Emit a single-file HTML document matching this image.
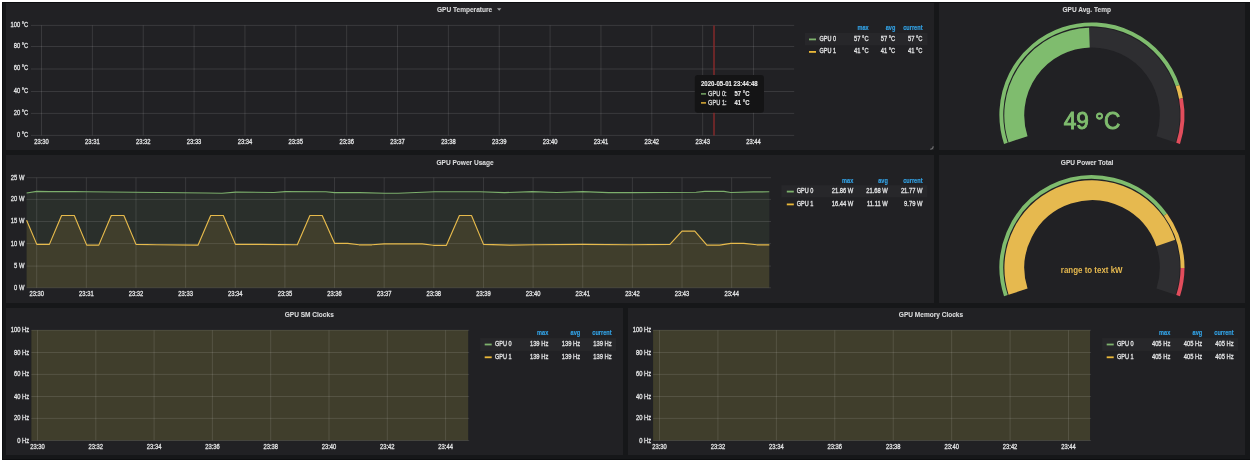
<!DOCTYPE html>
<html><head><meta charset="utf-8"><style>
html,body{margin:0;padding:0;background:#fff;width:1250px;height:462px;overflow:hidden;}
svg{display:block;font-family:"Liberation Sans", sans-serif;will-change:transform;}
</style></head><body>
<svg width="1250" height="462" viewBox="0 0 1250 462">
<rect x="2" y="2" width="1248" height="458" fill="#161719" />
<rect x="2" y="2" width="1248" height="1" fill="#0d0e10" />
<rect x="2" y="2" width="1" height="458" fill="#0d0e10" />
<rect x="2" y="459" width="1248" height="1" fill="#0d0e10" />
<rect x="6" y="3" width="928" height="147" fill="#212124" />
<rect x="939" y="3" width="306" height="147" fill="#212124" />
<rect x="6" y="155" width="928" height="148" fill="#212124" />
<rect x="939" y="155" width="306" height="148" fill="#212124" />
<rect x="6" y="308" width="617" height="147" fill="#212124" />
<rect x="628" y="308" width="617" height="147" fill="#212124" />
<text transform="translate(437.00,12.00) scale(1,1.1)" font-size="6.55" text-anchor="start" font-weight="bold" fill="#d8d9da" stroke="#d8d9da" stroke-width="0.1" >GPU Temperature</text>
<path d="M497,8.3 L501.4,8.3 L499.2,10.7 Z" fill="#9fa1a3"/>
<text transform="translate(1062.50,12.00) scale(1,1.1)" font-size="6.55" text-anchor="start" font-weight="bold" fill="#d8d9da" stroke="#d8d9da" stroke-width="0.1" >GPU Avg. Temp</text>
<text transform="translate(436.50,164.70) scale(1,1.1)" font-size="6.55" text-anchor="start" font-weight="bold" fill="#d8d9da" stroke="#d8d9da" stroke-width="0.1" >GPU Power Usage</text>
<text transform="translate(1060.80,164.70) scale(1,1.1)" font-size="6.55" text-anchor="start" font-weight="bold" fill="#d8d9da" stroke="#d8d9da" stroke-width="0.1" >GPU Power Total</text>
<text transform="translate(284.70,317.00) scale(1,1.1)" font-size="6.55" text-anchor="start" font-weight="bold" fill="#d8d9da" stroke="#d8d9da" stroke-width="0.1" >GPU SM Clocks</text>
<text transform="translate(898.80,317.00) scale(1,1.1)" font-size="6.55" text-anchor="start" font-weight="bold" fill="#d8d9da" stroke="#d8d9da" stroke-width="0.1" >GPU Memory Clocks</text>
<line x1="31" y1="135.4" x2="794.2" y2="135.4" stroke="rgba(255,255,255,0.11)" stroke-width="1"/>
<text transform="translate(28.30,136.83) scale(1,1.15)" font-size="5.8" text-anchor="end" font-weight="normal" fill="#e2e3e4" stroke="#e2e3e4" stroke-width="0.25" >0 °C</text>
<line x1="31" y1="113.4" x2="794.2" y2="113.4" stroke="rgba(255,255,255,0.11)" stroke-width="1"/>
<text transform="translate(28.30,114.83) scale(1,1.15)" font-size="5.8" text-anchor="end" font-weight="normal" fill="#e2e3e4" stroke="#e2e3e4" stroke-width="0.25" >20 °C</text>
<line x1="31" y1="91.5" x2="794.2" y2="91.5" stroke="rgba(255,255,255,0.11)" stroke-width="1"/>
<text transform="translate(28.30,92.93) scale(1,1.15)" font-size="5.8" text-anchor="end" font-weight="normal" fill="#e2e3e4" stroke="#e2e3e4" stroke-width="0.25" >40 °C</text>
<line x1="31" y1="69.0" x2="794.2" y2="69.0" stroke="rgba(255,255,255,0.11)" stroke-width="1"/>
<text transform="translate(28.30,70.43) scale(1,1.15)" font-size="5.8" text-anchor="end" font-weight="normal" fill="#e2e3e4" stroke="#e2e3e4" stroke-width="0.25" >60 °C</text>
<line x1="31" y1="46.5" x2="794.2" y2="46.5" stroke="rgba(255,255,255,0.11)" stroke-width="1"/>
<text transform="translate(28.30,47.93) scale(1,1.15)" font-size="5.8" text-anchor="end" font-weight="normal" fill="#e2e3e4" stroke="#e2e3e4" stroke-width="0.25" >80 °C</text>
<line x1="31" y1="25.4" x2="794.2" y2="25.4" stroke="rgba(255,255,255,0.11)" stroke-width="1"/>
<text transform="translate(28.30,26.83) scale(1,1.15)" font-size="5.8" text-anchor="end" font-weight="normal" fill="#e2e3e4" stroke="#e2e3e4" stroke-width="0.25" >100 °C</text>
<line x1="41.5" y1="25.4" x2="41.5" y2="135.4" stroke="rgba(255,255,255,0.11)" stroke-width="1"/>
<text transform="translate(41.50,143.70) scale(1,1.15)" font-size="5.8" text-anchor="middle" font-weight="normal" fill="#e2e3e4" stroke="#e2e3e4" stroke-width="0.25" >23:30</text>
<line x1="92.36" y1="25.4" x2="92.36" y2="135.4" stroke="rgba(255,255,255,0.11)" stroke-width="1"/>
<text transform="translate(92.36,143.70) scale(1,1.15)" font-size="5.8" text-anchor="middle" font-weight="normal" fill="#e2e3e4" stroke="#e2e3e4" stroke-width="0.25" >23:31</text>
<line x1="143.22" y1="25.4" x2="143.22" y2="135.4" stroke="rgba(255,255,255,0.11)" stroke-width="1"/>
<text transform="translate(143.22,143.70) scale(1,1.15)" font-size="5.8" text-anchor="middle" font-weight="normal" fill="#e2e3e4" stroke="#e2e3e4" stroke-width="0.25" >23:32</text>
<line x1="194.07999999999998" y1="25.4" x2="194.07999999999998" y2="135.4" stroke="rgba(255,255,255,0.11)" stroke-width="1"/>
<text transform="translate(194.08,143.70) scale(1,1.15)" font-size="5.8" text-anchor="middle" font-weight="normal" fill="#e2e3e4" stroke="#e2e3e4" stroke-width="0.25" >23:33</text>
<line x1="244.94" y1="25.4" x2="244.94" y2="135.4" stroke="rgba(255,255,255,0.11)" stroke-width="1"/>
<text transform="translate(244.94,143.70) scale(1,1.15)" font-size="5.8" text-anchor="middle" font-weight="normal" fill="#e2e3e4" stroke="#e2e3e4" stroke-width="0.25" >23:34</text>
<line x1="295.8" y1="25.4" x2="295.8" y2="135.4" stroke="rgba(255,255,255,0.11)" stroke-width="1"/>
<text transform="translate(295.80,143.70) scale(1,1.15)" font-size="5.8" text-anchor="middle" font-weight="normal" fill="#e2e3e4" stroke="#e2e3e4" stroke-width="0.25" >23:35</text>
<line x1="346.65999999999997" y1="25.4" x2="346.65999999999997" y2="135.4" stroke="rgba(255,255,255,0.11)" stroke-width="1"/>
<text transform="translate(346.66,143.70) scale(1,1.15)" font-size="5.8" text-anchor="middle" font-weight="normal" fill="#e2e3e4" stroke="#e2e3e4" stroke-width="0.25" >23:36</text>
<line x1="397.52" y1="25.4" x2="397.52" y2="135.4" stroke="rgba(255,255,255,0.11)" stroke-width="1"/>
<text transform="translate(397.52,143.70) scale(1,1.15)" font-size="5.8" text-anchor="middle" font-weight="normal" fill="#e2e3e4" stroke="#e2e3e4" stroke-width="0.25" >23:37</text>
<line x1="448.38" y1="25.4" x2="448.38" y2="135.4" stroke="rgba(255,255,255,0.11)" stroke-width="1"/>
<text transform="translate(448.38,143.70) scale(1,1.15)" font-size="5.8" text-anchor="middle" font-weight="normal" fill="#e2e3e4" stroke="#e2e3e4" stroke-width="0.25" >23:38</text>
<line x1="499.24" y1="25.4" x2="499.24" y2="135.4" stroke="rgba(255,255,255,0.11)" stroke-width="1"/>
<text transform="translate(499.24,143.70) scale(1,1.15)" font-size="5.8" text-anchor="middle" font-weight="normal" fill="#e2e3e4" stroke="#e2e3e4" stroke-width="0.25" >23:39</text>
<line x1="550.1" y1="25.4" x2="550.1" y2="135.4" stroke="rgba(255,255,255,0.11)" stroke-width="1"/>
<text transform="translate(550.10,143.70) scale(1,1.15)" font-size="5.8" text-anchor="middle" font-weight="normal" fill="#e2e3e4" stroke="#e2e3e4" stroke-width="0.25" >23:40</text>
<line x1="600.96" y1="25.4" x2="600.96" y2="135.4" stroke="rgba(255,255,255,0.11)" stroke-width="1"/>
<text transform="translate(600.96,143.70) scale(1,1.15)" font-size="5.8" text-anchor="middle" font-weight="normal" fill="#e2e3e4" stroke="#e2e3e4" stroke-width="0.25" >23:41</text>
<line x1="651.8199999999999" y1="25.4" x2="651.8199999999999" y2="135.4" stroke="rgba(255,255,255,0.11)" stroke-width="1"/>
<text transform="translate(651.82,143.70) scale(1,1.15)" font-size="5.8" text-anchor="middle" font-weight="normal" fill="#e2e3e4" stroke="#e2e3e4" stroke-width="0.25" >23:42</text>
<line x1="702.68" y1="25.4" x2="702.68" y2="135.4" stroke="rgba(255,255,255,0.11)" stroke-width="1"/>
<text transform="translate(702.68,143.70) scale(1,1.15)" font-size="5.8" text-anchor="middle" font-weight="normal" fill="#e2e3e4" stroke="#e2e3e4" stroke-width="0.25" >23:43</text>
<line x1="753.54" y1="25.4" x2="753.54" y2="135.4" stroke="rgba(255,255,255,0.11)" stroke-width="1"/>
<text transform="translate(753.54,143.70) scale(1,1.15)" font-size="5.8" text-anchor="middle" font-weight="normal" fill="#e2e3e4" stroke="#e2e3e4" stroke-width="0.25" >23:44</text>
<line x1="714" y1="25.4" x2="714" y2="135.4" stroke="#8a2a2c" stroke-width="1.4"/>
<rect x="694.8" y="75.0" width="69.2" height="37.8" rx="3" fill="#141415"/>
<text transform="translate(701.00,86.20) scale(1,1.05)" font-size="6.05" text-anchor="start" font-weight="bold" fill="#ececec" stroke="#ececec" stroke-width="0.1" >2020-05-01 23:44:48</text>
<rect x="701" y="93.2" width="5" height="1.4" fill="#7eb26d" />
<rect x="701" y="102.2" width="5" height="1.4" fill="#eab839" />
<text transform="translate(708.00,96.30) scale(1,1.15)" font-size="5.7" text-anchor="start" font-weight="normal" fill="#d8d9da" stroke="#d8d9da" stroke-width="0.25" >GPU 0:</text>
<text transform="translate(708.00,105.30) scale(1,1.15)" font-size="5.7" text-anchor="start" font-weight="normal" fill="#d8d9da" stroke="#d8d9da" stroke-width="0.25" >GPU 1:</text>
<text transform="translate(734.60,96.30) scale(1,1.15)" font-size="5.9" text-anchor="start" font-weight="bold" fill="#ececec" stroke="#ececec" stroke-width="0.1" >57 °C</text>
<text transform="translate(734.60,105.30) scale(1,1.15)" font-size="5.9" text-anchor="start" font-weight="bold" fill="#ececec" stroke="#ececec" stroke-width="0.1" >41 °C</text>
<text transform="translate(868.60,30.10) scale(1,1.15)" font-size="5.6" text-anchor="end" font-weight="bold" fill="#33a2e5" stroke="#33a2e5" stroke-width="0.15" >max</text>
<text transform="translate(895.30,30.10) scale(1,1.15)" font-size="5.6" text-anchor="end" font-weight="bold" fill="#33a2e5" stroke="#33a2e5" stroke-width="0.15" >avg</text>
<text transform="translate(922.50,30.10) scale(1,1.15)" font-size="5.6" text-anchor="end" font-weight="bold" fill="#33a2e5" stroke="#33a2e5" stroke-width="0.15" >current</text>
<rect x="805" y="33" width="122.5" height="12.3" fill="#27272a" />
<rect x="809" y="38.5" width="7" height="1.8" fill="#7eb26d" />
<text transform="translate(819.40,40.60) scale(1,1.15)" font-size="5.55" text-anchor="start" font-weight="normal" fill="#e2e3e4" stroke="#e2e3e4" stroke-width="0.25" >GPU 0</text>
<text transform="translate(868.60,40.60) scale(1,1.15)" font-size="5.8" text-anchor="end" font-weight="normal" fill="#e2e3e4" stroke="#e2e3e4" stroke-width="0.25" >57 °C</text>
<text transform="translate(895.30,40.60) scale(1,1.15)" font-size="5.8" text-anchor="end" font-weight="normal" fill="#e2e3e4" stroke="#e2e3e4" stroke-width="0.25" >57 °C</text>
<text transform="translate(922.50,40.60) scale(1,1.15)" font-size="5.8" text-anchor="end" font-weight="normal" fill="#e2e3e4" stroke="#e2e3e4" stroke-width="0.25" >57 °C</text>
<rect x="809" y="51.0" width="7" height="1.8" fill="#eab839" />
<text transform="translate(819.40,53.10) scale(1,1.15)" font-size="5.55" text-anchor="start" font-weight="normal" fill="#e2e3e4" stroke="#e2e3e4" stroke-width="0.25" >GPU 1</text>
<text transform="translate(868.60,53.10) scale(1,1.15)" font-size="5.8" text-anchor="end" font-weight="normal" fill="#e2e3e4" stroke="#e2e3e4" stroke-width="0.25" >41 °C</text>
<text transform="translate(895.30,53.10) scale(1,1.15)" font-size="5.8" text-anchor="end" font-weight="normal" fill="#e2e3e4" stroke="#e2e3e4" stroke-width="0.25" >41 °C</text>
<text transform="translate(922.50,53.10) scale(1,1.15)" font-size="5.8" text-anchor="end" font-weight="normal" fill="#e2e3e4" stroke="#e2e3e4" stroke-width="0.25" >41 °C</text>
<polygon points="26.6,287.8 26.6,193.0 36.8,191.4 49.4,191.6 74.0,191.6 86.7,191.8 206.4,193.0 222.0,193.3 235.8,192.1 273.9,192.5 285.2,191.6 325.8,191.8 334.7,192.6 359.8,192.6 385.0,193.3 398.0,193.3 434.3,191.8 480.0,191.8 504.6,192.6 532.3,191.6 556.6,192.5 582.6,191.6 608.5,192.6 630.0,192.6 696.2,192.3 704.8,191.4 723.9,191.4 730.8,192.5 753.3,191.9 769.3,191.8 769.3,287.8" fill="#7eb26d" fill-opacity="0.1"/>
<polygon points="26.6,287.8 26.6,220.2 36.8,244.4 49.4,244.4 61.6,215.5 74.3,215.5 86.7,245.1 98.8,245.1 111.3,215.5 123.9,215.5 136.0,244.4 156.8,244.8 198.1,245.1 210.7,215.5 223.3,215.5 235.5,244.4 260.0,244.4 297.3,244.8 309.9,215.5 322.2,215.5 334.7,243.4 347.7,243.4 359.0,244.8 371.9,244.8 384.1,243.9 422.2,243.9 433.4,245.3 446.4,245.3 459.4,215.5 471.5,215.5 483.5,244.4 509.8,245.1 534.0,244.8 582.6,244.4 630.0,244.8 669.9,244.4 682.0,231.1 694.8,231.1 706.9,245.1 719.6,245.1 730.8,243.4 743.8,243.4 756.8,244.8 769.3,244.8 769.3,287.8" fill="#eab839" fill-opacity="0.115"/>
<line x1="26.5" y1="287.8" x2="771" y2="287.8" stroke="rgba(255,255,255,0.11)" stroke-width="1"/>
<text transform="translate(24.40,289.73) scale(1,1.15)" font-size="5.8" text-anchor="end" font-weight="normal" fill="#e2e3e4" stroke="#e2e3e4" stroke-width="0.25" >0 W</text>
<line x1="26.5" y1="266.1" x2="771" y2="266.1" stroke="rgba(255,255,255,0.11)" stroke-width="1"/>
<text transform="translate(24.40,268.03) scale(1,1.15)" font-size="5.8" text-anchor="end" font-weight="normal" fill="#e2e3e4" stroke="#e2e3e4" stroke-width="0.25" >5 W</text>
<line x1="26.5" y1="243.6" x2="771" y2="243.6" stroke="rgba(255,255,255,0.11)" stroke-width="1"/>
<text transform="translate(24.40,245.53) scale(1,1.15)" font-size="5.8" text-anchor="end" font-weight="normal" fill="#e2e3e4" stroke="#e2e3e4" stroke-width="0.25" >10 W</text>
<line x1="26.5" y1="221.5" x2="771" y2="221.5" stroke="rgba(255,255,255,0.11)" stroke-width="1"/>
<text transform="translate(24.40,223.43) scale(1,1.15)" font-size="5.8" text-anchor="end" font-weight="normal" fill="#e2e3e4" stroke="#e2e3e4" stroke-width="0.25" >15 W</text>
<line x1="26.5" y1="199.4" x2="771" y2="199.4" stroke="rgba(255,255,255,0.11)" stroke-width="1"/>
<text transform="translate(24.40,201.33) scale(1,1.15)" font-size="5.8" text-anchor="end" font-weight="normal" fill="#e2e3e4" stroke="#e2e3e4" stroke-width="0.25" >20 W</text>
<line x1="26.5" y1="177.7" x2="771" y2="177.7" stroke="rgba(255,255,255,0.11)" stroke-width="1"/>
<text transform="translate(24.40,179.63) scale(1,1.15)" font-size="5.8" text-anchor="end" font-weight="normal" fill="#e2e3e4" stroke="#e2e3e4" stroke-width="0.25" >25 W</text>
<line x1="36.7" y1="177.7" x2="36.7" y2="287.8" stroke="rgba(255,255,255,0.11)" stroke-width="1"/>
<text transform="translate(36.70,296.20) scale(1,1.15)" font-size="5.8" text-anchor="middle" font-weight="normal" fill="#e2e3e4" stroke="#e2e3e4" stroke-width="0.25" >23:30</text>
<line x1="86.34" y1="177.7" x2="86.34" y2="287.8" stroke="rgba(255,255,255,0.11)" stroke-width="1"/>
<text transform="translate(86.34,296.20) scale(1,1.15)" font-size="5.8" text-anchor="middle" font-weight="normal" fill="#e2e3e4" stroke="#e2e3e4" stroke-width="0.25" >23:31</text>
<line x1="135.98000000000002" y1="177.7" x2="135.98000000000002" y2="287.8" stroke="rgba(255,255,255,0.11)" stroke-width="1"/>
<text transform="translate(135.98,296.20) scale(1,1.15)" font-size="5.8" text-anchor="middle" font-weight="normal" fill="#e2e3e4" stroke="#e2e3e4" stroke-width="0.25" >23:32</text>
<line x1="185.62" y1="177.7" x2="185.62" y2="287.8" stroke="rgba(255,255,255,0.11)" stroke-width="1"/>
<text transform="translate(185.62,296.20) scale(1,1.15)" font-size="5.8" text-anchor="middle" font-weight="normal" fill="#e2e3e4" stroke="#e2e3e4" stroke-width="0.25" >23:33</text>
<line x1="235.26" y1="177.7" x2="235.26" y2="287.8" stroke="rgba(255,255,255,0.11)" stroke-width="1"/>
<text transform="translate(235.26,296.20) scale(1,1.15)" font-size="5.8" text-anchor="middle" font-weight="normal" fill="#e2e3e4" stroke="#e2e3e4" stroke-width="0.25" >23:34</text>
<line x1="284.9" y1="177.7" x2="284.9" y2="287.8" stroke="rgba(255,255,255,0.11)" stroke-width="1"/>
<text transform="translate(284.90,296.20) scale(1,1.15)" font-size="5.8" text-anchor="middle" font-weight="normal" fill="#e2e3e4" stroke="#e2e3e4" stroke-width="0.25" >23:35</text>
<line x1="334.54" y1="177.7" x2="334.54" y2="287.8" stroke="rgba(255,255,255,0.11)" stroke-width="1"/>
<text transform="translate(334.54,296.20) scale(1,1.15)" font-size="5.8" text-anchor="middle" font-weight="normal" fill="#e2e3e4" stroke="#e2e3e4" stroke-width="0.25" >23:36</text>
<line x1="384.18" y1="177.7" x2="384.18" y2="287.8" stroke="rgba(255,255,255,0.11)" stroke-width="1"/>
<text transform="translate(384.18,296.20) scale(1,1.15)" font-size="5.8" text-anchor="middle" font-weight="normal" fill="#e2e3e4" stroke="#e2e3e4" stroke-width="0.25" >23:37</text>
<line x1="433.82" y1="177.7" x2="433.82" y2="287.8" stroke="rgba(255,255,255,0.11)" stroke-width="1"/>
<text transform="translate(433.82,296.20) scale(1,1.15)" font-size="5.8" text-anchor="middle" font-weight="normal" fill="#e2e3e4" stroke="#e2e3e4" stroke-width="0.25" >23:38</text>
<line x1="483.46" y1="177.7" x2="483.46" y2="287.8" stroke="rgba(255,255,255,0.11)" stroke-width="1"/>
<text transform="translate(483.46,296.20) scale(1,1.15)" font-size="5.8" text-anchor="middle" font-weight="normal" fill="#e2e3e4" stroke="#e2e3e4" stroke-width="0.25" >23:39</text>
<line x1="533.1" y1="177.7" x2="533.1" y2="287.8" stroke="rgba(255,255,255,0.11)" stroke-width="1"/>
<text transform="translate(533.10,296.20) scale(1,1.15)" font-size="5.8" text-anchor="middle" font-weight="normal" fill="#e2e3e4" stroke="#e2e3e4" stroke-width="0.25" >23:40</text>
<line x1="582.74" y1="177.7" x2="582.74" y2="287.8" stroke="rgba(255,255,255,0.11)" stroke-width="1"/>
<text transform="translate(582.74,296.20) scale(1,1.15)" font-size="5.8" text-anchor="middle" font-weight="normal" fill="#e2e3e4" stroke="#e2e3e4" stroke-width="0.25" >23:41</text>
<line x1="632.3800000000001" y1="177.7" x2="632.3800000000001" y2="287.8" stroke="rgba(255,255,255,0.11)" stroke-width="1"/>
<text transform="translate(632.38,296.20) scale(1,1.15)" font-size="5.8" text-anchor="middle" font-weight="normal" fill="#e2e3e4" stroke="#e2e3e4" stroke-width="0.25" >23:42</text>
<line x1="682.0200000000001" y1="177.7" x2="682.0200000000001" y2="287.8" stroke="rgba(255,255,255,0.11)" stroke-width="1"/>
<text transform="translate(682.02,296.20) scale(1,1.15)" font-size="5.8" text-anchor="middle" font-weight="normal" fill="#e2e3e4" stroke="#e2e3e4" stroke-width="0.25" >23:43</text>
<line x1="731.6600000000001" y1="177.7" x2="731.6600000000001" y2="287.8" stroke="rgba(255,255,255,0.11)" stroke-width="1"/>
<text transform="translate(731.66,296.20) scale(1,1.15)" font-size="5.8" text-anchor="middle" font-weight="normal" fill="#e2e3e4" stroke="#e2e3e4" stroke-width="0.25" >23:44</text>
<polyline points="26.6,193.0 36.8,191.4 49.4,191.6 74.0,191.6 86.7,191.8 206.4,193.0 222.0,193.3 235.8,192.1 273.9,192.5 285.2,191.6 325.8,191.8 334.7,192.6 359.8,192.6 385.0,193.3 398.0,193.3 434.3,191.8 480.0,191.8 504.6,192.6 532.3,191.6 556.6,192.5 582.6,191.6 608.5,192.6 630.0,192.6 696.2,192.3 704.8,191.4 723.9,191.4 730.8,192.5 753.3,191.9 769.3,191.8" fill="none" stroke="#7cae6c" stroke-width="1.1" stroke-linejoin="round"/>
<polyline points="26.6,220.2 36.8,244.4 49.4,244.4 61.6,215.5 74.3,215.5 86.7,245.1 98.8,245.1 111.3,215.5 123.9,215.5 136.0,244.4 156.8,244.8 198.1,245.1 210.7,215.5 223.3,215.5 235.5,244.4 260.0,244.4 297.3,244.8 309.9,215.5 322.2,215.5 334.7,243.4 347.7,243.4 359.0,244.8 371.9,244.8 384.1,243.9 422.2,243.9 433.4,245.3 446.4,245.3 459.4,215.5 471.5,215.5 483.5,244.4 509.8,245.1 534.0,244.8 582.6,244.4 630.0,244.8 669.9,244.4 682.0,231.1 694.8,231.1 706.9,245.1 719.6,245.1 730.8,243.4 743.8,243.4 756.8,244.8 769.3,244.8" fill="none" stroke="#e6ba4c" stroke-width="1.15" stroke-linejoin="round"/>
<text transform="translate(853.30,182.70) scale(1,1.15)" font-size="5.6" text-anchor="end" font-weight="bold" fill="#33a2e5" stroke="#33a2e5" stroke-width="0.15" >max</text>
<text transform="translate(887.80,182.70) scale(1,1.15)" font-size="5.6" text-anchor="end" font-weight="bold" fill="#33a2e5" stroke="#33a2e5" stroke-width="0.15" >avg</text>
<text transform="translate(922.50,182.70) scale(1,1.15)" font-size="5.6" text-anchor="end" font-weight="bold" fill="#33a2e5" stroke="#33a2e5" stroke-width="0.15" >current</text>
<rect x="781.4" y="185.2" width="145.89999999999998" height="12.2" fill="#27272a" />
<rect x="786.8" y="190.7" width="7" height="1.8" fill="#7eb26d" />
<text transform="translate(796.70,192.80) scale(1,1.15)" font-size="5.55" text-anchor="start" font-weight="normal" fill="#e2e3e4" stroke="#e2e3e4" stroke-width="0.25" >GPU 0</text>
<text transform="translate(853.30,192.80) scale(1,1.15)" font-size="5.8" text-anchor="end" font-weight="normal" fill="#e2e3e4" stroke="#e2e3e4" stroke-width="0.25" >21.86 W</text>
<text transform="translate(887.80,192.80) scale(1,1.15)" font-size="5.8" text-anchor="end" font-weight="normal" fill="#e2e3e4" stroke="#e2e3e4" stroke-width="0.25" >21.68 W</text>
<text transform="translate(922.50,192.80) scale(1,1.15)" font-size="5.8" text-anchor="end" font-weight="normal" fill="#e2e3e4" stroke="#e2e3e4" stroke-width="0.25" >21.77 W</text>
<rect x="786.8" y="203.5" width="7" height="1.8" fill="#eab839" />
<text transform="translate(796.70,205.60) scale(1,1.15)" font-size="5.55" text-anchor="start" font-weight="normal" fill="#e2e3e4" stroke="#e2e3e4" stroke-width="0.25" >GPU 1</text>
<text transform="translate(853.30,205.60) scale(1,1.15)" font-size="5.8" text-anchor="end" font-weight="normal" fill="#e2e3e4" stroke="#e2e3e4" stroke-width="0.25" >16.44 W</text>
<text transform="translate(887.80,205.60) scale(1,1.15)" font-size="5.8" text-anchor="end" font-weight="normal" fill="#e2e3e4" stroke="#e2e3e4" stroke-width="0.25" >11.11 W</text>
<text transform="translate(922.50,205.60) scale(1,1.15)" font-size="5.8" text-anchor="end" font-weight="normal" fill="#e2e3e4" stroke="#e2e3e4" stroke-width="0.25" >9.79 W</text>
<rect x="31.4" y="330.1" width="436.8" height="110.39999999999998" fill="#7eb26d" fill-opacity="0.1"/>
<rect x="31.4" y="330.1" width="436.8" height="110.39999999999998" fill="#eab839" fill-opacity="0.115"/>
<line x1="31.4" y1="440.5" x2="469.2" y2="440.5" stroke="rgba(255,255,255,0.11)" stroke-width="1"/>
<text transform="translate(29.20,442.58) scale(1,1.15)" font-size="5.8" text-anchor="end" font-weight="normal" fill="#e2e3e4" stroke="#e2e3e4" stroke-width="0.25" >0 Hz</text>
<line x1="31.4" y1="418.4" x2="469.2" y2="418.4" stroke="rgba(255,255,255,0.11)" stroke-width="1"/>
<text transform="translate(29.20,420.48) scale(1,1.15)" font-size="5.8" text-anchor="end" font-weight="normal" fill="#e2e3e4" stroke="#e2e3e4" stroke-width="0.25" >20 Hz</text>
<line x1="31.4" y1="396.5" x2="469.2" y2="396.5" stroke="rgba(255,255,255,0.11)" stroke-width="1"/>
<text transform="translate(29.20,398.58) scale(1,1.15)" font-size="5.8" text-anchor="end" font-weight="normal" fill="#e2e3e4" stroke="#e2e3e4" stroke-width="0.25" >40 Hz</text>
<line x1="31.4" y1="374.4" x2="469.2" y2="374.4" stroke="rgba(255,255,255,0.11)" stroke-width="1"/>
<text transform="translate(29.20,376.48) scale(1,1.15)" font-size="5.8" text-anchor="end" font-weight="normal" fill="#e2e3e4" stroke="#e2e3e4" stroke-width="0.25" >60 Hz</text>
<line x1="31.4" y1="352.5" x2="469.2" y2="352.5" stroke="rgba(255,255,255,0.11)" stroke-width="1"/>
<text transform="translate(29.20,354.58) scale(1,1.15)" font-size="5.8" text-anchor="end" font-weight="normal" fill="#e2e3e4" stroke="#e2e3e4" stroke-width="0.25" >80 Hz</text>
<line x1="31.4" y1="330.3" x2="469.2" y2="330.3" stroke="rgba(255,255,255,0.11)" stroke-width="1"/>
<text transform="translate(29.20,332.38) scale(1,1.15)" font-size="5.8" text-anchor="end" font-weight="normal" fill="#e2e3e4" stroke="#e2e3e4" stroke-width="0.25" >100 Hz</text>
<line x1="37.5" y1="330.3" x2="37.5" y2="440.5" stroke="rgba(255,255,255,0.11)" stroke-width="1"/>
<text transform="translate(37.50,448.60) scale(1,1.15)" font-size="5.8" text-anchor="middle" font-weight="normal" fill="#e2e3e4" stroke="#e2e3e4" stroke-width="0.25" >23:30</text>
<line x1="95.8" y1="330.3" x2="95.8" y2="440.5" stroke="rgba(255,255,255,0.11)" stroke-width="1"/>
<text transform="translate(95.80,448.60) scale(1,1.15)" font-size="5.8" text-anchor="middle" font-weight="normal" fill="#e2e3e4" stroke="#e2e3e4" stroke-width="0.25" >23:32</text>
<line x1="154.1" y1="330.3" x2="154.1" y2="440.5" stroke="rgba(255,255,255,0.11)" stroke-width="1"/>
<text transform="translate(154.10,448.60) scale(1,1.15)" font-size="5.8" text-anchor="middle" font-weight="normal" fill="#e2e3e4" stroke="#e2e3e4" stroke-width="0.25" >23:34</text>
<line x1="212.39999999999998" y1="330.3" x2="212.39999999999998" y2="440.5" stroke="rgba(255,255,255,0.11)" stroke-width="1"/>
<text transform="translate(212.40,448.60) scale(1,1.15)" font-size="5.8" text-anchor="middle" font-weight="normal" fill="#e2e3e4" stroke="#e2e3e4" stroke-width="0.25" >23:36</text>
<line x1="270.7" y1="330.3" x2="270.7" y2="440.5" stroke="rgba(255,255,255,0.11)" stroke-width="1"/>
<text transform="translate(270.70,448.60) scale(1,1.15)" font-size="5.8" text-anchor="middle" font-weight="normal" fill="#e2e3e4" stroke="#e2e3e4" stroke-width="0.25" >23:38</text>
<line x1="329.0" y1="330.3" x2="329.0" y2="440.5" stroke="rgba(255,255,255,0.11)" stroke-width="1"/>
<text transform="translate(329.00,448.60) scale(1,1.15)" font-size="5.8" text-anchor="middle" font-weight="normal" fill="#e2e3e4" stroke="#e2e3e4" stroke-width="0.25" >23:40</text>
<line x1="387.29999999999995" y1="330.3" x2="387.29999999999995" y2="440.5" stroke="rgba(255,255,255,0.11)" stroke-width="1"/>
<text transform="translate(387.30,448.60) scale(1,1.15)" font-size="5.8" text-anchor="middle" font-weight="normal" fill="#e2e3e4" stroke="#e2e3e4" stroke-width="0.25" >23:42</text>
<line x1="445.59999999999997" y1="330.3" x2="445.59999999999997" y2="440.5" stroke="rgba(255,255,255,0.11)" stroke-width="1"/>
<text transform="translate(445.60,448.60) scale(1,1.15)" font-size="5.8" text-anchor="middle" font-weight="normal" fill="#e2e3e4" stroke="#e2e3e4" stroke-width="0.25" >23:44</text>
<text transform="translate(548.30,335.30) scale(1,1.15)" font-size="5.6" text-anchor="end" font-weight="bold" fill="#33a2e5" stroke="#33a2e5" stroke-width="0.15" >max</text>
<text transform="translate(580.20,335.30) scale(1,1.15)" font-size="5.6" text-anchor="end" font-weight="bold" fill="#33a2e5" stroke="#33a2e5" stroke-width="0.15" >avg</text>
<text transform="translate(611.60,335.30) scale(1,1.15)" font-size="5.6" text-anchor="end" font-weight="bold" fill="#33a2e5" stroke="#33a2e5" stroke-width="0.15" >current</text>
<rect x="480.2" y="338.1" width="135.8" height="12.8" fill="#27272a" />
<rect x="484.7" y="343.6" width="7" height="1.8" fill="#7eb26d" />
<text transform="translate(495.00,345.70) scale(1,1.15)" font-size="5.55" text-anchor="start" font-weight="normal" fill="#e2e3e4" stroke="#e2e3e4" stroke-width="0.25" >GPU 0</text>
<text transform="translate(548.30,345.70) scale(1,1.15)" font-size="5.8" text-anchor="end" font-weight="normal" fill="#e2e3e4" stroke="#e2e3e4" stroke-width="0.25" >139 Hz</text>
<text transform="translate(580.20,345.70) scale(1,1.15)" font-size="5.8" text-anchor="end" font-weight="normal" fill="#e2e3e4" stroke="#e2e3e4" stroke-width="0.25" >139 Hz</text>
<text transform="translate(611.60,345.70) scale(1,1.15)" font-size="5.8" text-anchor="end" font-weight="normal" fill="#e2e3e4" stroke="#e2e3e4" stroke-width="0.25" >139 Hz</text>
<rect x="484.7" y="356.40000000000003" width="7" height="1.8" fill="#eab839" />
<text transform="translate(495.00,358.50) scale(1,1.15)" font-size="5.55" text-anchor="start" font-weight="normal" fill="#e2e3e4" stroke="#e2e3e4" stroke-width="0.25" >GPU 1</text>
<text transform="translate(548.30,358.50) scale(1,1.15)" font-size="5.8" text-anchor="end" font-weight="normal" fill="#e2e3e4" stroke="#e2e3e4" stroke-width="0.25" >139 Hz</text>
<text transform="translate(580.20,358.50) scale(1,1.15)" font-size="5.8" text-anchor="end" font-weight="normal" fill="#e2e3e4" stroke="#e2e3e4" stroke-width="0.25" >139 Hz</text>
<text transform="translate(611.60,358.50) scale(1,1.15)" font-size="5.8" text-anchor="end" font-weight="normal" fill="#e2e3e4" stroke="#e2e3e4" stroke-width="0.25" >139 Hz</text>
<rect x="653.1" y="330.1" width="436.9999999999999" height="110.39999999999998" fill="#7eb26d" fill-opacity="0.1"/>
<rect x="653.1" y="330.1" width="436.9999999999999" height="110.39999999999998" fill="#eab839" fill-opacity="0.115"/>
<line x1="653.1" y1="440.5" x2="1091.1" y2="440.5" stroke="rgba(255,255,255,0.11)" stroke-width="1"/>
<text transform="translate(651.20,442.58) scale(1,1.15)" font-size="5.8" text-anchor="end" font-weight="normal" fill="#e2e3e4" stroke="#e2e3e4" stroke-width="0.25" >0 Hz</text>
<line x1="653.1" y1="418.4" x2="1091.1" y2="418.4" stroke="rgba(255,255,255,0.11)" stroke-width="1"/>
<text transform="translate(651.20,420.48) scale(1,1.15)" font-size="5.8" text-anchor="end" font-weight="normal" fill="#e2e3e4" stroke="#e2e3e4" stroke-width="0.25" >20 Hz</text>
<line x1="653.1" y1="396.5" x2="1091.1" y2="396.5" stroke="rgba(255,255,255,0.11)" stroke-width="1"/>
<text transform="translate(651.20,398.58) scale(1,1.15)" font-size="5.8" text-anchor="end" font-weight="normal" fill="#e2e3e4" stroke="#e2e3e4" stroke-width="0.25" >40 Hz</text>
<line x1="653.1" y1="374.4" x2="1091.1" y2="374.4" stroke="rgba(255,255,255,0.11)" stroke-width="1"/>
<text transform="translate(651.20,376.48) scale(1,1.15)" font-size="5.8" text-anchor="end" font-weight="normal" fill="#e2e3e4" stroke="#e2e3e4" stroke-width="0.25" >60 Hz</text>
<line x1="653.1" y1="352.5" x2="1091.1" y2="352.5" stroke="rgba(255,255,255,0.11)" stroke-width="1"/>
<text transform="translate(651.20,354.58) scale(1,1.15)" font-size="5.8" text-anchor="end" font-weight="normal" fill="#e2e3e4" stroke="#e2e3e4" stroke-width="0.25" >80 Hz</text>
<line x1="653.1" y1="330.3" x2="1091.1" y2="330.3" stroke="rgba(255,255,255,0.11)" stroke-width="1"/>
<text transform="translate(651.20,332.38) scale(1,1.15)" font-size="5.8" text-anchor="end" font-weight="normal" fill="#e2e3e4" stroke="#e2e3e4" stroke-width="0.25" >100 Hz</text>
<line x1="659.5" y1="330.3" x2="659.5" y2="440.5" stroke="rgba(255,255,255,0.11)" stroke-width="1"/>
<text transform="translate(659.50,448.60) scale(1,1.15)" font-size="5.8" text-anchor="middle" font-weight="normal" fill="#e2e3e4" stroke="#e2e3e4" stroke-width="0.25" >23:30</text>
<line x1="717.93" y1="330.3" x2="717.93" y2="440.5" stroke="rgba(255,255,255,0.11)" stroke-width="1"/>
<text transform="translate(717.93,448.60) scale(1,1.15)" font-size="5.8" text-anchor="middle" font-weight="normal" fill="#e2e3e4" stroke="#e2e3e4" stroke-width="0.25" >23:32</text>
<line x1="776.36" y1="330.3" x2="776.36" y2="440.5" stroke="rgba(255,255,255,0.11)" stroke-width="1"/>
<text transform="translate(776.36,448.60) scale(1,1.15)" font-size="5.8" text-anchor="middle" font-weight="normal" fill="#e2e3e4" stroke="#e2e3e4" stroke-width="0.25" >23:34</text>
<line x1="834.79" y1="330.3" x2="834.79" y2="440.5" stroke="rgba(255,255,255,0.11)" stroke-width="1"/>
<text transform="translate(834.79,448.60) scale(1,1.15)" font-size="5.8" text-anchor="middle" font-weight="normal" fill="#e2e3e4" stroke="#e2e3e4" stroke-width="0.25" >23:36</text>
<line x1="893.22" y1="330.3" x2="893.22" y2="440.5" stroke="rgba(255,255,255,0.11)" stroke-width="1"/>
<text transform="translate(893.22,448.60) scale(1,1.15)" font-size="5.8" text-anchor="middle" font-weight="normal" fill="#e2e3e4" stroke="#e2e3e4" stroke-width="0.25" >23:38</text>
<line x1="951.65" y1="330.3" x2="951.65" y2="440.5" stroke="rgba(255,255,255,0.11)" stroke-width="1"/>
<text transform="translate(951.65,448.60) scale(1,1.15)" font-size="5.8" text-anchor="middle" font-weight="normal" fill="#e2e3e4" stroke="#e2e3e4" stroke-width="0.25" >23:40</text>
<line x1="1010.0799999999999" y1="330.3" x2="1010.0799999999999" y2="440.5" stroke="rgba(255,255,255,0.11)" stroke-width="1"/>
<text transform="translate(1010.08,448.60) scale(1,1.15)" font-size="5.8" text-anchor="middle" font-weight="normal" fill="#e2e3e4" stroke="#e2e3e4" stroke-width="0.25" >23:42</text>
<line x1="1068.51" y1="330.3" x2="1068.51" y2="440.5" stroke="rgba(255,255,255,0.11)" stroke-width="1"/>
<text transform="translate(1068.51,448.60) scale(1,1.15)" font-size="5.8" text-anchor="middle" font-weight="normal" fill="#e2e3e4" stroke="#e2e3e4" stroke-width="0.25" >23:44</text>
<text transform="translate(1170.30,335.30) scale(1,1.15)" font-size="5.6" text-anchor="end" font-weight="bold" fill="#33a2e5" stroke="#33a2e5" stroke-width="0.15" >max</text>
<text transform="translate(1202.20,335.30) scale(1,1.15)" font-size="5.6" text-anchor="end" font-weight="bold" fill="#33a2e5" stroke="#33a2e5" stroke-width="0.15" >avg</text>
<text transform="translate(1233.60,335.30) scale(1,1.15)" font-size="5.6" text-anchor="end" font-weight="bold" fill="#33a2e5" stroke="#33a2e5" stroke-width="0.15" >current</text>
<rect x="1102.2" y="338.1" width="135.79999999999995" height="12.8" fill="#27272a" />
<rect x="1106.7" y="343.6" width="7" height="1.8" fill="#7eb26d" />
<text transform="translate(1117.00,345.70) scale(1,1.15)" font-size="5.55" text-anchor="start" font-weight="normal" fill="#e2e3e4" stroke="#e2e3e4" stroke-width="0.25" >GPU 0</text>
<text transform="translate(1170.30,345.70) scale(1,1.15)" font-size="5.8" text-anchor="end" font-weight="normal" fill="#e2e3e4" stroke="#e2e3e4" stroke-width="0.25" >405 Hz</text>
<text transform="translate(1202.20,345.70) scale(1,1.15)" font-size="5.8" text-anchor="end" font-weight="normal" fill="#e2e3e4" stroke="#e2e3e4" stroke-width="0.25" >405 Hz</text>
<text transform="translate(1233.60,345.70) scale(1,1.15)" font-size="5.8" text-anchor="end" font-weight="normal" fill="#e2e3e4" stroke="#e2e3e4" stroke-width="0.25" >405 Hz</text>
<rect x="1106.7" y="356.40000000000003" width="7" height="1.8" fill="#eab839" />
<text transform="translate(1117.00,358.50) scale(1,1.15)" font-size="5.55" text-anchor="start" font-weight="normal" fill="#e2e3e4" stroke="#e2e3e4" stroke-width="0.25" >GPU 1</text>
<text transform="translate(1170.30,358.50) scale(1,1.15)" font-size="5.8" text-anchor="end" font-weight="normal" fill="#e2e3e4" stroke="#e2e3e4" stroke-width="0.25" >405 Hz</text>
<text transform="translate(1202.20,358.50) scale(1,1.15)" font-size="5.8" text-anchor="end" font-weight="normal" fill="#e2e3e4" stroke="#e2e3e4" stroke-width="0.25" >405 Hz</text>
<text transform="translate(1233.60,358.50) scale(1,1.15)" font-size="5.8" text-anchor="end" font-weight="normal" fill="#e2e3e4" stroke="#e2e3e4" stroke-width="0.25" >405 Hz</text>
<path d="M1018.06,139.33 A77.75,77.75 0 1 1 1165.94,139.33" fill="none" stroke="#2e2e31" stroke-width="19.9"/>
<path d="M1018.06,139.33 A77.75,77.75 0 0 1 1089.42,37.59" fill="none" stroke="#7fbc6e" stroke-width="19.9"/>
<path d="M1005.88,143.28 A90.55,90.55 0 0 1 1177.57,85.67" fill="none" stroke="#7fbc6e" stroke-width="3.9"/>
<path d="M1177.57,85.67 A90.55,90.55 0 0 1 1180.99,98.57" fill="none" stroke="#e6b94f" stroke-width="3.9"/>
<path d="M1180.99,98.57 A90.55,90.55 0 0 1 1178.12,143.28" fill="none" stroke="#e24d5c" stroke-width="3.9"/>
<path d="M1018.06,291.63 A77.75,77.75 0 1 1 1165.94,291.63" fill="none" stroke="#2e2e31" stroke-width="19.9"/>
<path d="M1018.06,291.63 A77.75,77.75 0 0 1 1165.75,242.99" fill="none" stroke="#e6b94f" stroke-width="19.9"/>
<path d="M1005.88,295.58 A90.55,90.55 0 0 1 1165.44,214.63" fill="none" stroke="#7fbc6e" stroke-width="3.9"/>
<path d="M1165.44,214.63 A90.55,90.55 0 0 1 1182.55,268.00" fill="none" stroke="#e6b94f" stroke-width="3.9"/>
<path d="M1182.55,268.00 A90.55,90.55 0 0 1 1178.12,295.58" fill="none" stroke="#e24d5c" stroke-width="3.9"/>
<text transform="translate(1092.00,129.10) scale(1,1.08)" font-size="22.6" text-anchor="middle" font-weight="normal" fill="#7fbc6e" stroke="#7fbc6e" stroke-width="0.9" >49 °C</text>
<text transform="translate(1091.70,272.80) scale(1,1.18)" font-size="7.96" text-anchor="middle" font-weight="bold" fill="#e6b94f" >range to text kW</text>
<path d="M933.2,146.2 Q933.2,149.2 930.2,149.2" fill="none" stroke="#6e6e70" stroke-width="1.1"/>
</svg></body></html>
